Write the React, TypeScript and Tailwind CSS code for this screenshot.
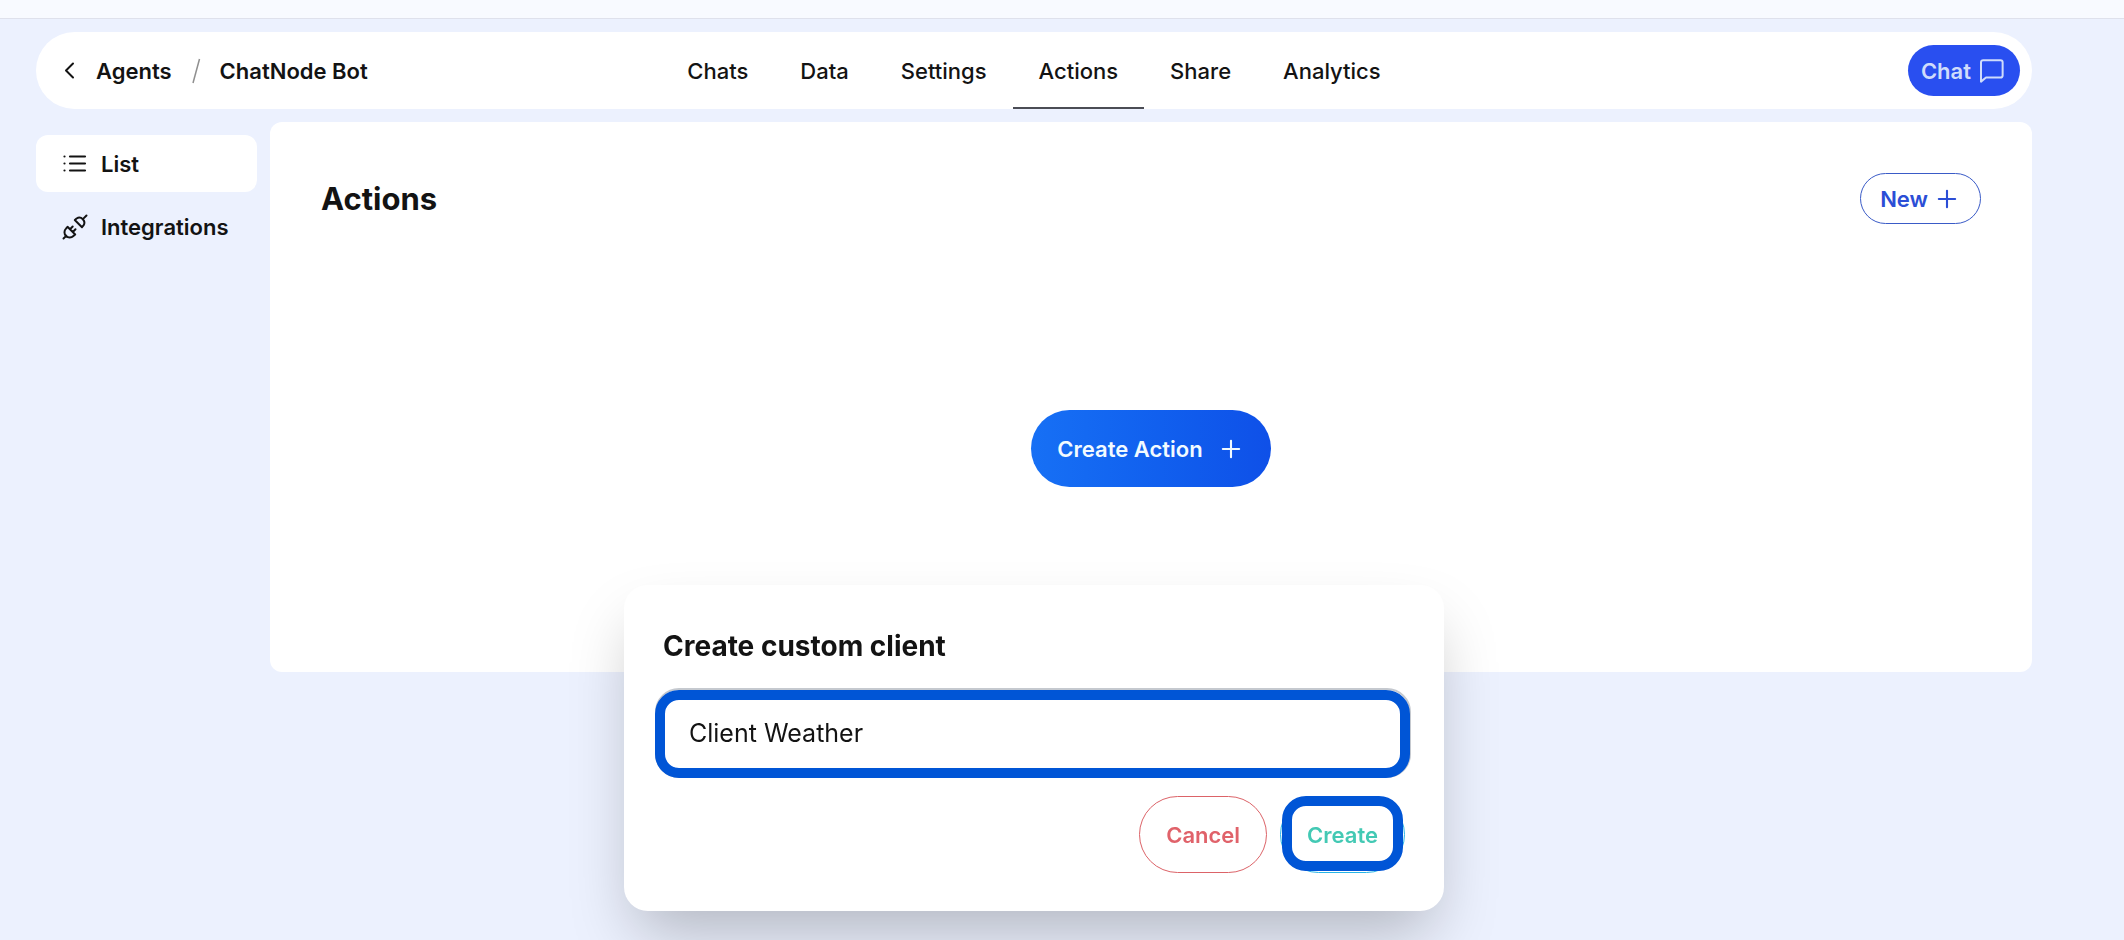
import { useState } from "react";
import { Plus } from "lucide-react";
import { clsx } from "clsx";

const tabs = ["Chats", "Data", "Settings", "Actions", "Share", "Analytics"];

const pillClass =
	"flex items-center justify-center rounded-full font-semibold text-[22px] leading-7 cursor-pointer";

export default function App() {
	return (
		<div className="min-h-screen bg-[#ecf1fe] font-['Inter','Liberation_Sans',sans-serif] text-[#131313]">
			<div className="h-[19px] bg-[#f8faff] border-b border-[#dfe1ec]" />
			<div className="pl-9 pr-[92px] pt-[13px]">
				<Header />
				<div className="flex items-start gap-[13px] pt-[13px]">
					<Sidebar />
					<ActionsPanel />
				</div>
			</div>
			<CreateClientDialog />
		</div>
	);
}

const Header = () => {
	return (
		<header className="grid grid-cols-[1fr_auto_1fr] items-stretch h-[77px] rounded-full bg-white px-3">
			<div className="flex items-center pl-3 text-[22px] leading-7 font-semibold">
				<a href="#agents" className="flex items-center gap-3">
					<BackIcon />
					Agents
				</a>
				<svg viewBox="0 0 10 26" className="w-[10px] h-[26px] mx-[19px]" fill="none">
					<path d="M8.5 1L2 25" stroke="#8f8f8f" strokeWidth="1.5" />
				</svg>
				<span>ChatNode Bot</span>
			</div>
			<nav className="flex">
				{tabs.map((tab) => (
					<a
						key={tab}
						href={`#${tab.toLowerCase()}`}
						className={clsx(
							"flex items-center px-[26px] border-y-2 border-transparent text-[22px] leading-7 font-medium",
							tab === "Actions" && "border-b-[#4b4d55]"
						)}
					>
						{tab}
					</a>
				))}
			</nav>
			<div className="flex items-center justify-end">
				<button
					type="button"
					className={clsx(pillClass, "h-[51px] px-[13px] gap-[6px] bg-[#294ff0] text-[#cfdcfb]")}
				>
					Chat
					<ChatIcon />
				</button>
			</div>
		</header>
	);
};

const Sidebar = () => {
	return (
		<aside className="w-[221px] shrink-0 pt-[13px] flex flex-col gap-[6px] text-[22px] leading-7 font-semibold">
			<a
				href="#list"
				className="flex items-center gap-[13px] h-[57px] pl-[26px] rounded-xl bg-white"
			>
				<ListIcon />
				List
			</a>
			<a
				href="#integrations"
				className="flex items-center gap-[13px] h-[57px] pl-[26px] rounded-xl"
			>
				<PlugIcon />
				Integrations
			</a>
		</aside>
	);
};

const ActionsPanel = () => {
	return (
		<main className="flex-1 min-h-[550px] rounded-xl bg-white px-[51px] pt-[51px]">
			<div className="flex items-center justify-between">
				<h1 className="text-[31px] leading-10 font-bold">Actions</h1>
				<button
					type="button"
					className={clsx(pillClass, "h-[51px] px-[19px] gap-[5px] border border-[#3a5bc7] text-[#2b4ed6]")}
				>
					New
					<Plus size={28} strokeWidth={1.8} />
				</button>
			</div>
			<div className="flex justify-center pt-[186px]">
				<button
					type="button"
					className={clsx(
						pillClass,
						"h-[77px] px-[26px] gap-[14px] bg-linear-to-r from-[#1770f5] to-[#0f50e8] text-[#f2fbff]"
					)}
				>
					Create Action
					<Plus size={28} strokeWidth={1.8} />
				</button>
			</div>
		</main>
	);
};

const CreateClientDialog = () => {
	const [name, setName] = useState("Client Weather");
	return (
		<div className="fixed inset-0 flex items-end justify-center pl-9 pr-[92px] pb-[29px]">
			<div
				role="dialog"
				aria-labelledby="dialog-title"
				className="w-full max-w-[820px] rounded-3xl bg-white px-[39px] pt-[41px] pb-[38px] shadow-[0_32px_64px_-12px_rgba(0,0,0,0.25)]"
			>
				<h2 id="dialog-title" className="text-[28px] leading-10 font-bold">
					Create custom client
				</h2>
				<div className="relative -ml-2 -mr-[6px] mt-[22px]">
					<input
						aria-labelledby="dialog-title"
						value={name}
						onChange={(e) => setName(e.target.value)}
						className="block w-full h-[90px] px-8 rounded-3xl border-2 border-[#c5c9cf] bg-white text-[25px] leading-8 outline-none"
					/>
					<Highlight className="left-0 right-px top-[2px] bottom-0" />
				</div>
				<div className="flex justify-end gap-[13px] mt-[18px]">
					<button
						type="button"
						className={clsx(pillClass, "h-[77px] px-[26px] border border-[#dc6368] text-[#e0626a]")}
					>
						Cancel
					</button>
					<button
						type="button"
						className={clsx(pillClass, "relative h-[77px] px-[26px] border border-[#28b4e6] text-[#43c9b4]")}
					>
						Create
						<Highlight className="left-px right-px -top-px bottom-px" />
					</button>
				</div>
			</div>
		</div>
	);
};

// thick frame drawn on top of a control
const Highlight = ({ className }: { className: string }) => (
	<span
		className={clsx(
			"absolute rounded-3xl border-10 border-[#0055d6] pointer-events-none",
			className
		)}
	/>
);

const BackIcon = () => (
	<svg
		viewBox="0 0 24 24"
		className="size-6"
		fill="none"
		stroke="currentColor"
		strokeWidth="2"
		strokeLinecap="round"
		strokeLinejoin="round"
	>
		<path d="M13 4.5l-7 7 7 7" />
	</svg>
);

const ChatIcon = () => (
	<svg
		viewBox="0 0 24 24"
		className="size-[30px]"
		fill="none"
		stroke="currentColor"
		strokeWidth="1.6"
		strokeLinecap="round"
		strokeLinejoin="round"
	>
		<path d="M20.5 15.5a1.7 1.7 0 0 1-1.7 1.7H7.2L3.200 20.500V5a1.700 1.700 0 0 1 1.700-1.700h13.900a1.700 1.700 0 0 1 1.700 1.700z" />
	</svg>
);

const ListIcon = () => (
	<svg viewBox="0 0 26 26" className="size-[26px]" fill="none" stroke="currentColor" strokeLinecap="round">
		<path d="M8 5.500h15M8 12.500h15M8 19.500h15" strokeWidth="2.2" />
		<path d="M2.500 5.500h.01M2.500 12.500h.01M2.500 19.500h.01" strokeWidth="2.2" />
	</svg>
);

const PlugIcon = () => (
	<svg
		viewBox="0 0 26 26"
		className="size-[26px]"
		fill="none"
		stroke="currentColor"
		strokeWidth="2"
		strokeLinecap="round"
		strokeLinejoin="round"
	>
		<path d="M12.800 6l7.200 7.200 1.500-1.800a5 5 0 0 0-6.900-6.900zM21.600 4.400l2.900-2.900" />
		<path d="M5.500 12.800l7.700 7.700-1.800 1.500a5.100 5.100 0 0 1-7.400-7.400zM4.400 21.600l-2.900 2.900M8 15.200l2.700-2.700M10.800 18l2.700-2.700" />
	</svg>
);
